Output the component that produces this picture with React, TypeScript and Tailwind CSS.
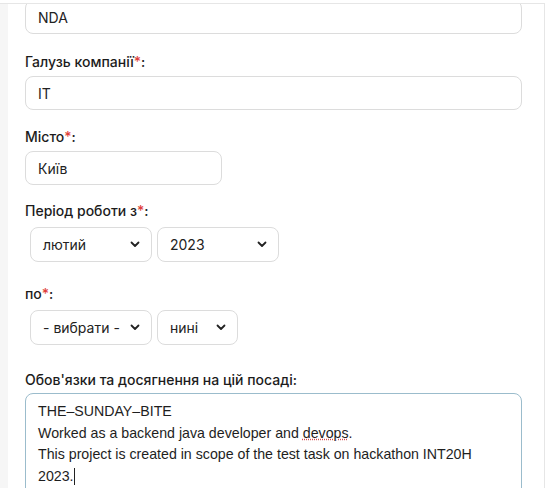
import React from "react";

const inter = { fontFamily: 'Inter, "Liberation Sans", Arial, sans-serif' };
const arial = { fontFamily: '"Liberation Sans", Arial, sans-serif' };

function Chevron() {
  return (
    <svg width="10" height="7" viewBox="0 0 10 7" className="shrink-0">
      <path d="M1.5 1.5 L5 5 L8.5 1.5" fill="none" stroke="#222" strokeWidth="1.8" strokeLinecap="round" strokeLinejoin="round" />
    </svg>
  );
}

function Label({ text, req = true }: { text: string; req?: boolean }) {
  return (
    <div className="h-[20px] leading-[20px] text-[14px] font-medium text-[#1c1c1c]">
      {text}
      {req && <span className="text-[#e0403a]">*</span>}:
    </div>
  );
}

function Input({ value, w }: { value: string; w: string }) {
  return (
    <div className={`${w} h-[34px] border border-[#dcdcdc] rounded-[8px] bg-white flex items-center pl-[12px] text-[14px] text-[#222]`}>
      {value}
    </div>
  );
}

function Select({ value, w }: { value: string; w: string }) {
  return (
    <div className={`${w} h-[35px] border border-[#dcdcdc] rounded-[8px] bg-white flex items-center justify-between pl-[12px] pr-[11px] text-[14px] text-[#222]`}>
      <span>{value}</span>
      <Chevron />
    </div>
  );
}

export default function App() {
  return (
    <div className="relative w-[548px] h-[488px] overflow-hidden bg-white" style={inter}>
      <div className="flex h-full">
        <div className="w-[8px] bg-[#f6f6f6] shrink-0" />
        <div className="w-[537px] shrink-0 border-r border-[#e6e6e6] pl-[17px] pr-[22px] flex flex-col [&>*]:shrink-0">
          <Input value="NDA" w="w-[497px]" />
          <div className="mt-[18px]"><Label text="Галузь компанії" /></div>
          <div className="mt-[4px]"><Input value="IT" w="w-[497px]" /></div>
          <div className="mt-[17px]"><Label text="Місто" /></div>
          <div className="mt-[4px]"><Input value="Київ" w="w-[197px]" /></div>
          <div className="mt-[16px]"><Label text="Період роботи з" /></div>
          <div className="mt-[6px] ml-[5px] flex gap-[5px]">
            <Select value="лютий" w="w-[122px]" />
            <Select value="2023" w="w-[122px]" />
          </div>
          <div className="mt-[22px]"><Label text="по" /></div>
          <div className="mt-[6px] ml-[5px] flex gap-[5px]">
            <Select value="- вибрати -" w="w-[122px]" />
            <Select value="нині" w="w-[81px]" />
          </div>
          <div className="mt-[25px]"><Label text="Обов'язки та досягнення на цій посаді" req={false} /></div>
          <div
            className="mt-[3px] w-[497px] h-[120px] border border-[#9bbccc] rounded-[8px] bg-white pl-[12px] pt-[7px] text-[14.2px] leading-[21.5px] text-[#1e1e1e]"
            style={arial}
          >
            <div>THE–SUNDAY–BITE</div>
            <div>
              Worked as a backend java developer and{" "}
              <span className="underline decoration-dotted decoration-[#d05050]">devops</span>.
            </div>
            <div>This project is created in scope of the test task on hackathon INT20H</div>
            <div>
              2023.<span className="inline-block w-[1px] h-[17px] bg-[#222] align-middle" />
            </div>
          </div>
        </div>
      </div>
      <div className="absolute top-0 left-0 w-[545px] h-[4px] bg-white border-b border-[#e6e6e6]" />
    </div>
  );
}
